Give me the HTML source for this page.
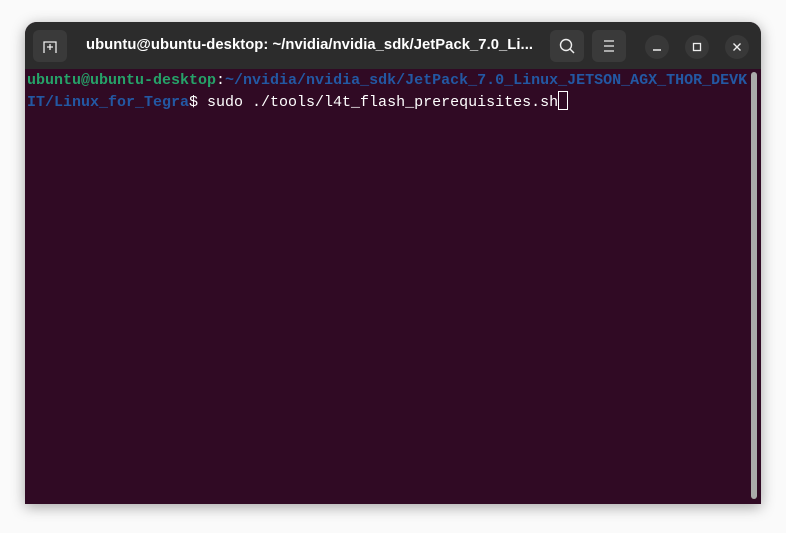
<!DOCTYPE html>
<html><head><style>
body{margin:0;width:786px;height:533px;background:#fafafa;position:relative;overflow:hidden;font-family:"Liberation Sans",sans-serif}
.win{position:absolute;left:25px;top:22px;width:736px;height:482px;background:#300a24;border-radius:12px 12px 0 0;overflow:hidden;box-shadow:0 3px 14px rgba(0,0,0,.35)}
.hdr{position:absolute;left:0;top:0;width:736px;height:47px;background:#2c2c2c}
.btn{position:absolute;top:8px;width:34px;height:32px;background:#3a3a3a;border-radius:6px}
.cb{position:absolute;top:13px;width:24px;height:24px;background:#383838;border-radius:50%}
.title{position:absolute;left:61px;top:15px;color:#fff;font-weight:bold;font-size:14.8px;letter-spacing:0.05px;white-space:nowrap}
.term{position:absolute;left:2px;top:49px;font-family:"Liberation Mono",monospace;font-size:15px;line-height:20px;color:#fff;white-space:pre}
.g{color:#26a269;font-weight:bold}.b{color:#2358a3;font-weight:bold}
.cur{display:inline-block;width:8px;height:17px;border:1px solid #fff;vertical-align:-4px}
.sb{position:absolute;left:726px;top:50px;width:6px;height:427px;background:#aaa;border-radius:3px}
</style></head><body>
<div class="win">
<div class="hdr">
<div class="btn" style="left:8px"><svg width="34" height="32"><path d="M11 23V12h12v11" fill="none" stroke="#eee" stroke-width="1.3"/><path d="M17 14v6M14 17h6" stroke="#eee" stroke-width="1.3"/></svg></div>
<div class="title">ubuntu@ubuntu-desktop: ~/nvidia/nvidia_sdk/JetPack_7.0_Li...</div>
<div class="btn" style="left:525px"><svg width="34" height="32"><circle cx="16" cy="15" r="5.5" fill="none" stroke="#eee" stroke-width="1.4"/><path d="M20 19l4 4" stroke="#eee" stroke-width="1.5"/></svg></div>
<div class="btn" style="left:567px"><svg width="34" height="32"><path d="M12 11h10M12 16h10M12 21h10" stroke="#eee" stroke-width="1.3"/></svg></div>
<div class="cb" style="left:620px"><svg width="24" height="24"><path d="M8 15h8" stroke="#eee" stroke-width="1.4"/></svg></div>
<div class="cb" style="left:660px"><svg width="24" height="24"><rect x="8.5" y="8.5" width="7" height="7" fill="none" stroke="#eee" stroke-width="1.3"/></svg></div>
<div class="cb" style="left:700px"><svg width="24" height="24"><path d="M8.5 8.5l7 7M15.5 8.5l-7 7" stroke="#eee" stroke-width="1.4"/></svg></div>
</div>
<div class="term"><span class="g">ubuntu@ubuntu-desktop</span>:<span class="b">~/nvidia/nvidia_sdk/JetPack_7.0_Linux_JETSON_AGX_THOR_DEVK
IT/Linux_for_Tegra</span>$ sudo ./tools/l4t_flash_prerequisites.sh<span class="cur"></span></div>
<div class="sb"></div>
</div>
</body></html>
